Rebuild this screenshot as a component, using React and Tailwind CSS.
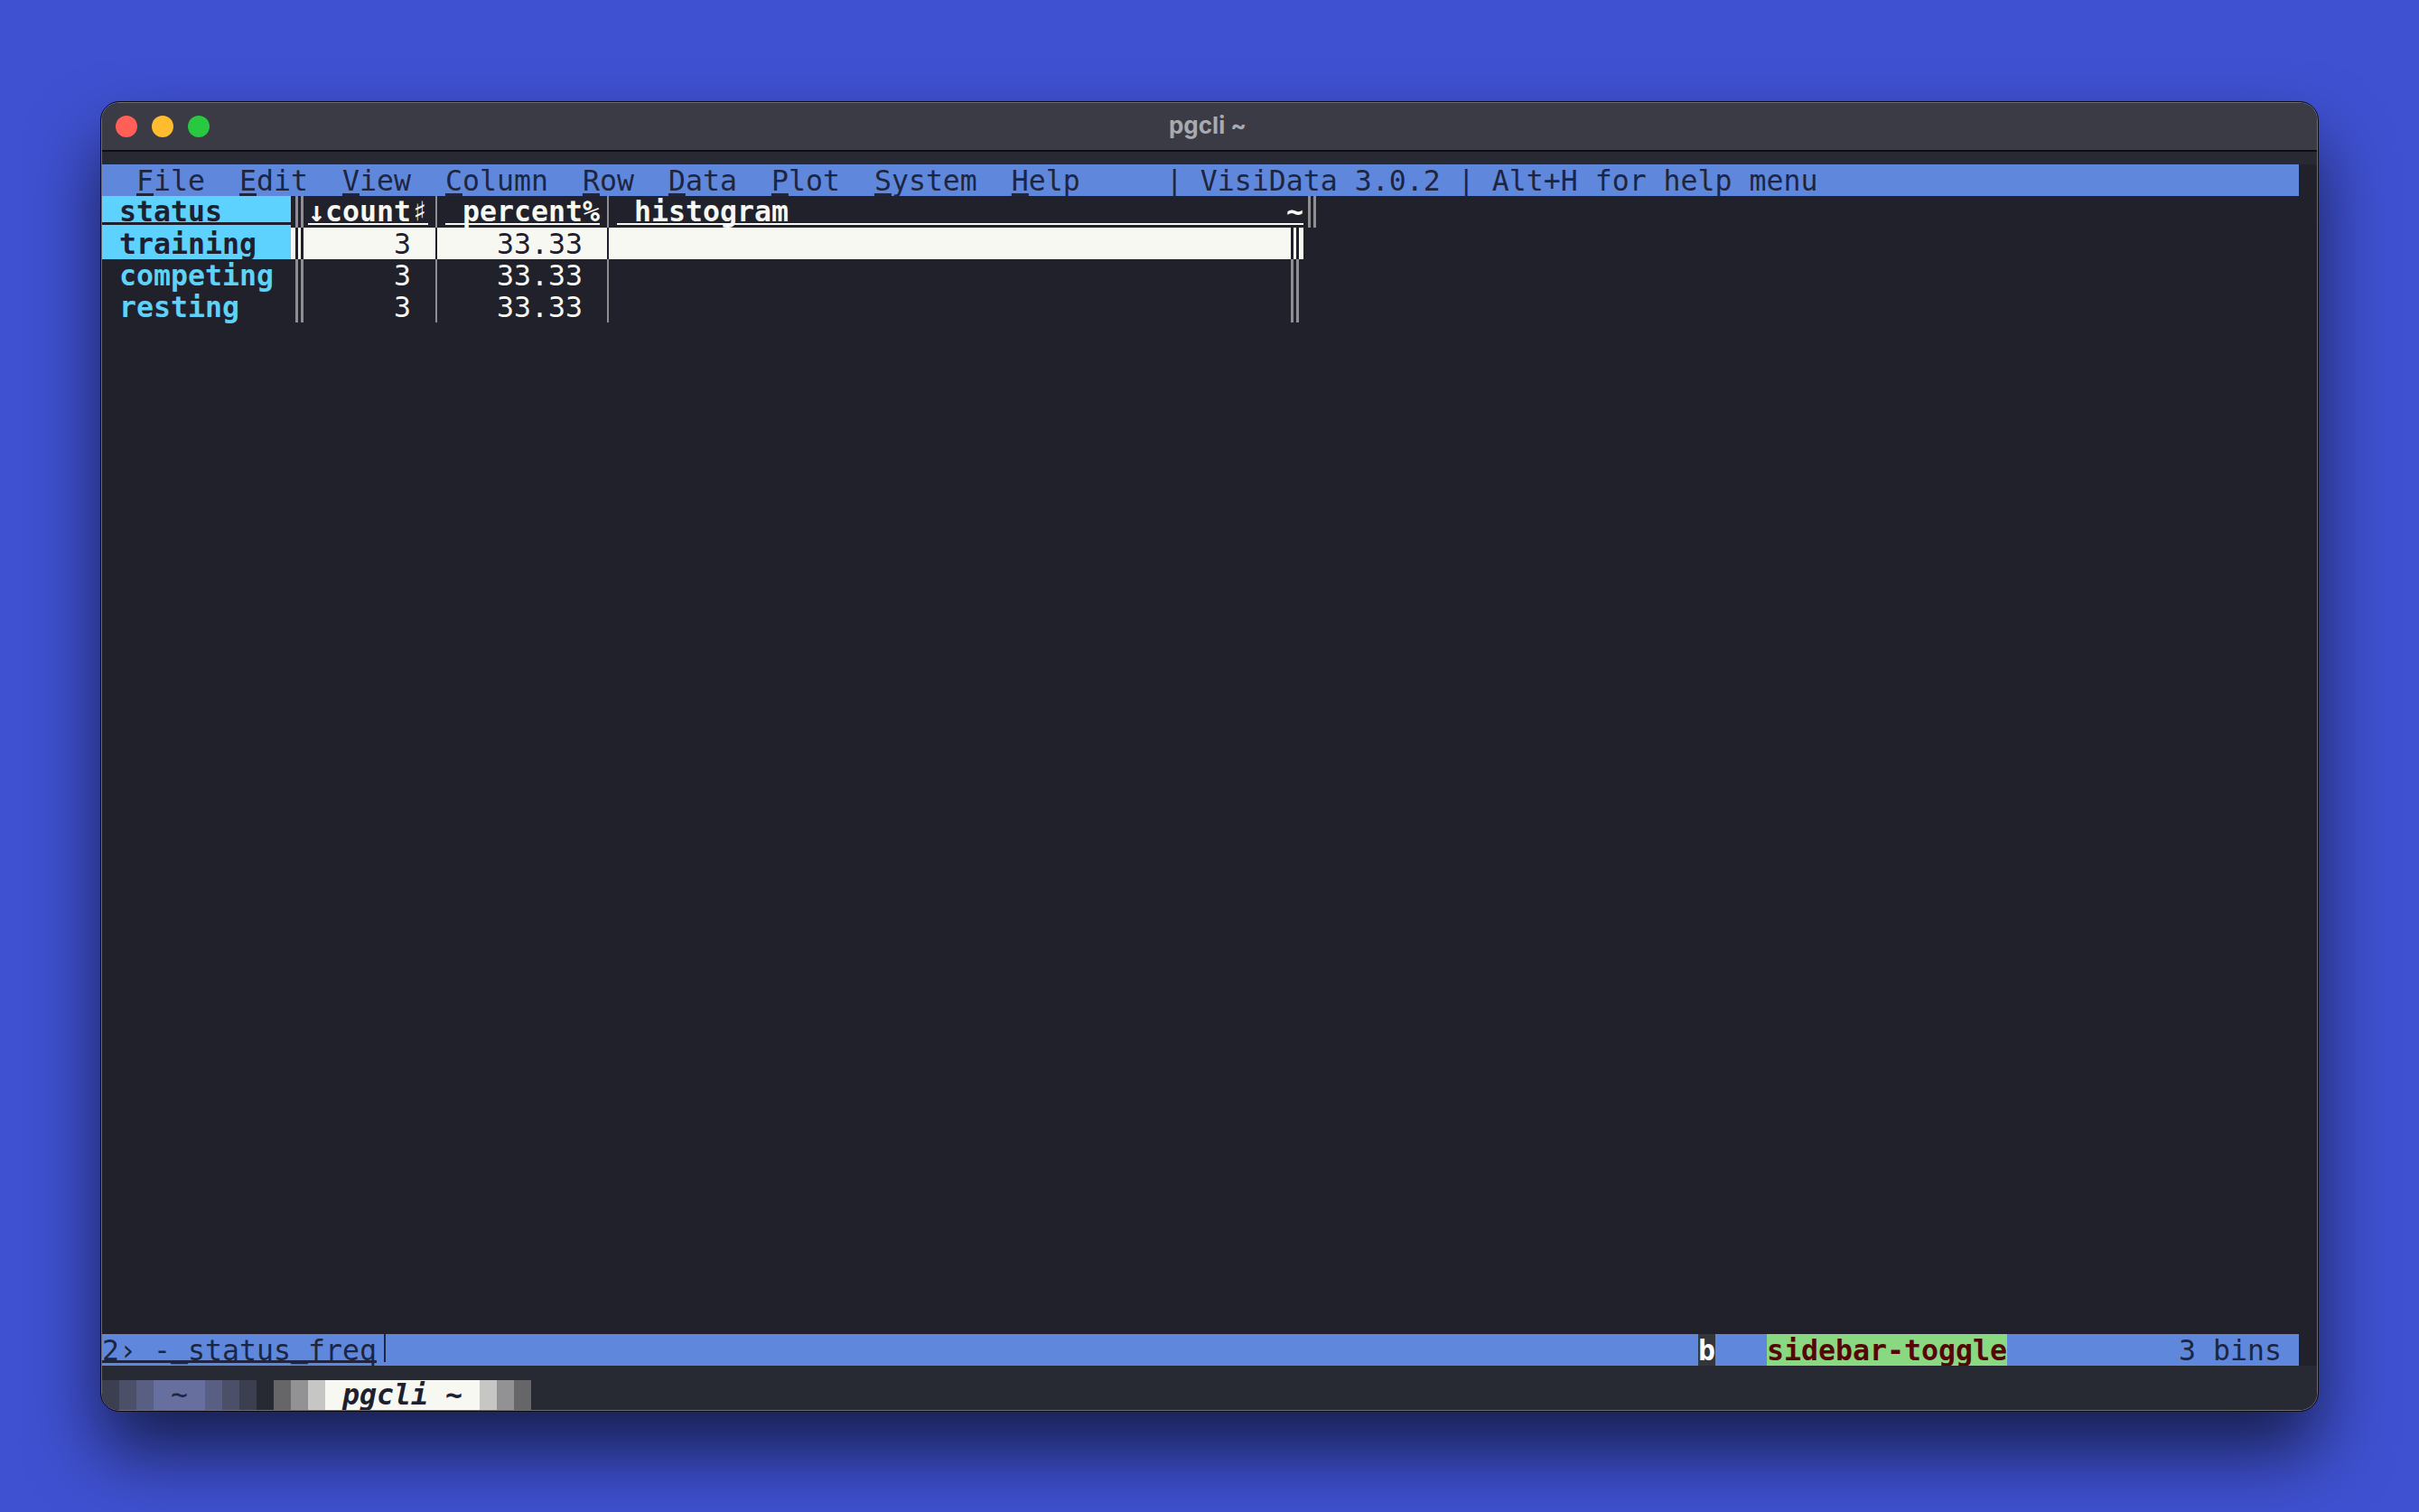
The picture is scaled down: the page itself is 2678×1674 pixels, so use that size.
import React from "react";

const MENU = [
  ["F", "ile"],
  ["E", "dit"],
  ["V", "iew"],
  ["C", "olumn"],
  ["R", "ow"],
  ["D", "ata"],
  ["P", "lot"],
  ["S", "ystem"],
  ["H", "elp"],
];

const ROWS = [
  { label: "competing", count: "3", percent: "33.33" },
  { label: "resting", count: "3", percent: "33.33" },
];

// one terminal cell holding a single box-drawing line
const Single = ({ line = "bg-[#8e8e92]", bg = "" }) => (
  <div className={`h-full w-[19px] shrink-0 pl-[8px] ${bg}`}>
    <div className={`h-full w-[2px] ${line}`} />
  </div>
);

// one terminal cell holding a double box-drawing line
const Double = ({ line = "bg-[#8e8e92]", bg = "" }) => (
  <div className={`flex h-full w-[19px] shrink-0 gap-[3px] pl-[5px] ${bg}`}>
    <div className={`h-full w-[3px] ${line}`} />
    <div className={`h-full w-[3px] ${line}`} />
  </div>
);

const Menu = () => (
  <div className="flex h-[35px] w-[2432px] items-center whitespace-pre bg-[#5f88dd] leading-[36px] text-[#1e2540]">
    <span>{"  "}</span>
    {MENU.map(([key, rest]) => (
      <span key={key}>
        <span className="underline decoration-[3px] underline-offset-[3px]">{key}</span>
        {rest}
        {"  "}
      </span>
    ))}
    <span>{"   | VisiData 3.0.2 | Alt+H for help menu"}</span>
  </div>
);

const Header = () => (
  <div className="flex h-[35px] whitespace-pre font-bold text-[#f8f8f2]">
    <div className="h-full w-[209px] shrink-0 bg-[#5ed2ff] text-[#1e2030]">
      <div className="h-[32px] border-b-[3px] border-[#1e2030] leading-[34px]">{" status"}</div>
    </div>
    <Double />
    <div className="h-[32px] w-[133px] shrink-0 border-b-2 border-[#f8f8f2] leading-[34px]">
      ↓count<span className="font-normal">♯</span>
    </div>
    <Single />
    <div className="h-[32px] w-[171px] shrink-0 border-b-2 border-[#f8f8f2] leading-[34px]">{" percent%"}</div>
    <Single />
    <div className="flex h-[32px] w-[760px] shrink-0 justify-between border-b-2 border-[#f8f8f2] leading-[34px]">
      <span>{" histogram"}</span>
      <span>~</span>
    </div>
    <Double />
  </div>
);

const Selected = () => (
  <div className="flex h-[35px] whitespace-pre leading-[36px]">
    <div className="h-full w-[209px] shrink-0 bg-[#5ed2ff] font-bold text-[#1e2030]">{" training"}</div>
    <Double line="bg-[#1e2030]" bg="bg-[#f8f8f2]" />
    <div className="h-full w-[133px] shrink-0 bg-[#f8f8f2] text-[#1e2030]">{"     3"}</div>
    <Single line="bg-[#1e2030]" bg="bg-[#f8f8f2]" />
    <div className="h-full w-[171px] shrink-0 bg-[#f8f8f2] text-[#1e2030]">{"   33.33"}</div>
    <Single line="bg-[#1e2030]" bg="bg-[#f8f8f2]" />
    <div className="h-full w-[741px] shrink-0 bg-[#f8f8f2]" />
    <Double line="bg-[#1e2030]" bg="bg-[#f8f8f2]" />
  </div>
);

const Row = ({ label, count, percent }) => (
  <div className="flex h-[35px] whitespace-pre leading-[36px] text-[#f8f8f2]">
    <div className="w-[209px] shrink-0 font-bold text-[#5ed2f8]">{" " + label}</div>
    <Double />
    <div className="w-[133px] shrink-0">{"     " + count}</div>
    <Single />
    <div className="w-[171px] shrink-0">{"   " + percent}</div>
    <Single />
    <div className="w-[741px] shrink-0" />
    <Double />
  </div>
);

const Status = () => (
  <div className="flex h-[35px] w-[2432px] items-center whitespace-pre bg-[#5f88dd] leading-[36px] text-[#1e2540]">
    <div className="flex h-full w-[1767px] shrink-0 items-center">
      <span className="underline decoration-[3px] underline-offset-[0px] [text-decoration-skip-ink:none]">
        {"2› -"}
        <span className="align-[3px] leading-[0]">_</span>
        {"status"}
        <span className="align-[3px] leading-[0]">_</span>
        {"freq"}
      </span>
      <div className="ml-[8px] h-[31px] w-[2px] self-start bg-[#1e2540]" />
    </div>
    <span className="h-full bg-[#34363d] font-bold text-white">b</span>
    <span className="w-[57px]" />
    <span className="h-full bg-[#88d982] font-bold text-[#560505]">sidebar-toggle</span>
    <div className="flex-1" />
    <span>{"3 bins "}</span>
  </div>
);

const Shade = ({ c }) => <div className={`h-full w-[19px] shrink-0 ${c}`} />;

const Tabs = () => (
  <div className="flex h-[33px] items-center whitespace-pre">
    <Shade c="bg-[#3b3f4f]" />
    <Shade c="bg-[#4b5068]" />
    <Shade c="bg-[#585f82]" />
    <div className="flex h-full w-[57px] shrink-0 justify-center bg-[#666f9e] leading-[33px] text-[#1e2540]">~</div>
    <Shade c="bg-[#585f82]" />
    <Shade c="bg-[#4b5068]" />
    <Shade c="bg-[#3b3f4f]" />
    <Shade c="" />
    <Shade c="bg-[#666668]" />
    <Shade c="bg-[#929294]" />
    <Shade c="bg-[#c6c6c4]" />
    <div className="h-full w-[171px] shrink-0 bg-[#f8f8f2] font-bold italic leading-[33px] text-[#1e2030]">{" pgcli ~ "}</div>
    <Shade c="bg-[#c6c6c4]" />
    <Shade c="bg-[#929294]" />
    <Shade c="bg-[#666668]" />
  </div>
);

export default function App() {
  return (
    <div className="flex h-[1674px] w-[2678px] justify-center overflow-hidden bg-[#3f51d1] pt-[113px]">
      <div className="flex h-[1449px] w-[2454px] flex-col overflow-hidden rounded-[20px] border border-[#6c6d75] bg-[#21212c] font-['DejaVu_Sans_Mono',monospace] text-[31.56px] shadow-[0_45px_80px_#000000a0] outline outline-[#0c0c12]">
        {/* title bar */}
        <div className="grid h-[54px] shrink-0 grid-cols-[1fr_auto_1fr] items-center border-b-2 border-[#0e0e12] bg-[#3a3b44] font-['Inter',sans-serif]">
          <div className="flex gap-[16px] pl-[15px]">
            <div className="size-[24px] rounded-full bg-[#ff5f57]" />
            <div className="size-[24px] rounded-full bg-[#febc2e]" />
            <div className="size-[24px] rounded-full bg-[#28c840]" />
          </div>
          <div className="pb-[3px] pr-[4px] text-[26px] font-bold text-[#a9aab0]">pgcli ~</div>
          <div />
        </div>
        <div className="h-[14px] shrink-0 bg-[#282a33]" />

        <Menu />

        {/* sheet */}
        <div className="h-[1260px] shrink-0">
          <Header />
          <Selected />
          {ROWS.map((r) => (
            <Row key={r.label} {...r} />
          ))}
        </div>

        <Status />
        <div className="flex flex-1 flex-col justify-end bg-[#282a33]">
          <Tabs />
        </div>
      </div>
    </div>
  );
}
